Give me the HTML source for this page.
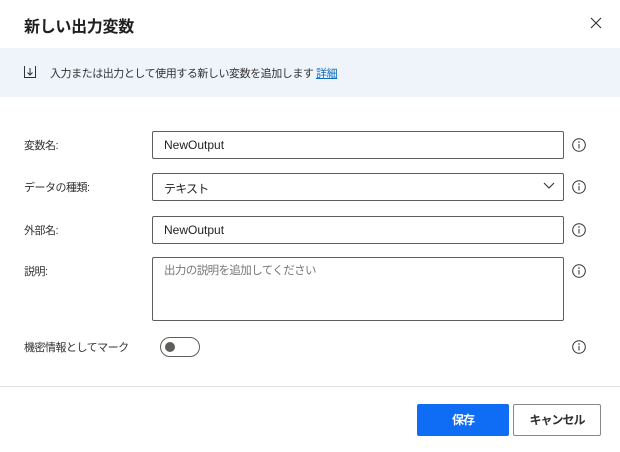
<!DOCTYPE html>
<html><head><meta charset="utf-8"><style>
*{box-sizing:border-box;margin:0;padding:0}
body{width:620px;height:452px;background:#fff;font-family:"Liberation Sans","Noto Sans CJK JP",sans-serif;color:#323130;position:relative;overflow:hidden}
.abs{position:absolute}
.title{left:24px;top:13px;font-size:16px;font-weight:bold;color:#201f1e;letter-spacing:-0.3px}
.banner{left:0;top:48px;width:620px;height:49px;background:#eff4fb}
.lbl{left:24px;font-size:11px;letter-spacing:-0.5px;color:#323130}
.inp{left:152px;width:412px;height:28px;border:1px solid #605e5c;border-radius:2px;font-size:12px;padding:6px 11px;color:#201f1e}
.info{left:572px;width:14px;height:14px}
.btn{height:32px;border-radius:2px;font-size:12px;font-weight:bold;text-align:center;line-height:30px;letter-spacing:-1px}
</style></head><body>
<div class="abs title">新しい出力変数</div>
<svg class="abs" style="left:590px;top:17px" width="12" height="12" viewBox="0 0 12 12"><path d="M1 1L11 11M11 1L1 11" stroke="#323130" stroke-width="1.1"/></svg>
<div class="abs banner"></div>
<svg class="abs" style="left:24px;top:65px" width="12" height="13" viewBox="0 0 12 13"><path d="M0.5 1V12.5H11.5V1" fill="none" stroke="#323130"/><path d="M6 3V10M3.5 7.5L6 10L8.5 7.5" fill="none" stroke="#323130"/></svg>
<div class="abs" style="left:50px;top:65px;font-size:11px;letter-spacing:-0.45px;color:#323130">入力または出力として使用する新しい変数を追加します <span style="color:#0f6cbd;text-decoration:underline">詳細</span></div>
<div class="abs lbl" style="top:137px">変数名:</div>
<div class="abs inp" style="top:131px">NewOutput</div>
<div class="abs lbl" style="top:179px">データの種類:</div>
<div class="abs inp" style="top:173px;letter-spacing:-0.8px">テキスト</div>
<svg class="abs" style="left:543px;top:182px" width="12" height="8" viewBox="0 0 12 8"><path d="M1 1L6 6L11 1" fill="none" stroke="#323130" stroke-width="1.1"/></svg>
<div class="abs lbl" style="top:222px">外部名:</div>
<div class="abs inp" style="top:216px">NewOutput</div>
<div class="abs lbl" style="top:263px">説明:</div>
<div class="abs inp" style="top:257px;height:64px;padding-top:4px;color:#797775;font-size:11.5px;letter-spacing:-0.6px">出力の説明を追加してください</div>
<div class="abs lbl" style="top:339px">機密情報としてマーク</div>
<div class="abs" style="left:160px;top:337px;width:40px;height:20px;border:1px solid #605e5c;border-radius:10px"><div class="abs" style="left:4px;top:4px;width:10px;height:10px;border-radius:50%;background:#605e5c"></div></div>
<svg class="abs info" style="top:138px" viewBox="0 0 14 14"><circle cx="7" cy="7" r="6.3" fill="none" stroke="#323130"/><path d="M7 6V10.5" stroke="#323130"/><circle cx="7" cy="4" r=".8" fill="#323130"/></svg>
<svg class="abs info" style="top:180px" viewBox="0 0 14 14"><circle cx="7" cy="7" r="6.3" fill="none" stroke="#323130"/><path d="M7 6V10.5" stroke="#323130"/><circle cx="7" cy="4" r=".8" fill="#323130"/></svg>
<svg class="abs info" style="top:223px" viewBox="0 0 14 14"><circle cx="7" cy="7" r="6.3" fill="none" stroke="#323130"/><path d="M7 6V10.5" stroke="#323130"/><circle cx="7" cy="4" r=".8" fill="#323130"/></svg>
<svg class="abs info" style="top:264px" viewBox="0 0 14 14"><circle cx="7" cy="7" r="6.3" fill="none" stroke="#323130"/><path d="M7 6V10.5" stroke="#323130"/><circle cx="7" cy="4" r=".8" fill="#323130"/></svg>
<svg class="abs info" style="top:340px" viewBox="0 0 14 14"><circle cx="7" cy="7" r="6.3" fill="none" stroke="#323130"/><path d="M7 6V10.5" stroke="#323130"/><circle cx="7" cy="4" r=".8" fill="#323130"/></svg>
<div class="abs" style="left:0;top:386px;width:620px;height:1px;background:#e1dfdd"></div>
<div class="abs btn" style="left:417px;top:404px;width:92px;background:#0f6cf5;color:#fff;line-height:32px">保存</div>
<div class="abs btn" style="left:513px;top:404px;width:88px;border:1px solid #8a8886;color:#323130">キャンセル</div>
</body></html>
